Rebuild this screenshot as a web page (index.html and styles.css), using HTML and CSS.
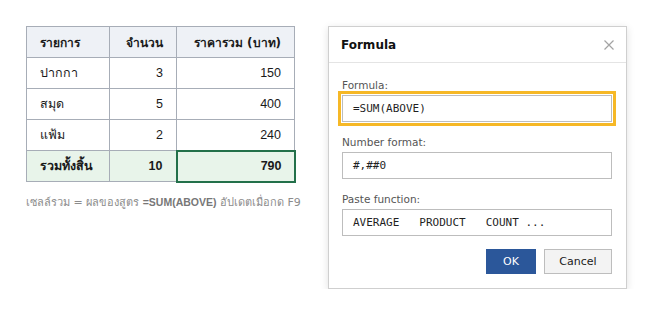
FILE: index.html
```html
<!DOCTYPE html>
<html>
<head>
<meta charset="utf-8">
<link rel="stylesheet" href="styles.css">
</head>
<body>
<div class="page">
  <div class="sheet">
    <table class="grid">
      <colgroup><col class="c1"><col class="c2"><col class="c3"></colgroup>
      <thead>
        <tr><th class="left">รายการ</th><th>จำนวน</th><th>ราคารวม (บาท)</th></tr>
      </thead>
      <tbody>
        <tr><td class="left">ปากกา</td><td>3</td><td>150</td></tr>
        <tr><td class="left">สมุด</td><td>5</td><td>400</td></tr>
        <tr><td class="left">แฟ้ม</td><td>2</td><td>240</td></tr>
        <tr class="total"><td class="left">รวมทั้งสิ้น</td><td>10</td><td class="active">790</td></tr>
      </tbody>
    </table>
    <p class="note">เซลล์รวม = ผลของสูตร <b>=SUM(ABOVE)</b> อัปเดตเมื่อกด F9</p>
  </div>

  <div class="dialog">
    <div class="dlg-head">
      <span class="dlg-title">Formula</span>
      <svg class="close" width="10" height="10" viewBox="0 0 10 10"><path d="M0.5 0.5L9.5 9.5M9.5 0.5L0.5 9.5" stroke="#a3a3a3" stroke-width="1.2" fill="none"/></svg>
    </div>
    <div class="dlg-body">
      <div class="field">
        <label class="lbl">Formula:</label>
        <div class="inp mono focus">=SUM(ABOVE)</div>
      </div>
      <div class="field">
        <label class="lbl">Number format:</label>
        <div class="inp mono">#,##0</div>
      </div>
      <div class="field">
        <label class="lbl">Paste function:</label>
        <div class="inp mono funcs"><span>AVERAGE</span><span>PRODUCT</span><span>COUNT ...</span></div>
      </div>
      <div class="actions">
        <button class="btn primary">OK</button>
        <button class="btn">Cancel</button>
      </div>
    </div>
  </div>
</div>
</body>
</html>
```
FILE: styles.css
```css
html, body {
  margin: 0;
  padding: 0;
  background: #ffffff;
}
body {
  font-family: Tahoma, "DejaVu Sans", sans-serif;
  color: #1a1a1a;
}
.page {
  display: flex;
  align-items: flex-start;
  padding: 26px 0 0 26px;
  gap: 34px;
}
.sheet {
  width: 268px;
}
.grid {
  border-collapse: collapse;
  width: 268px;
  font-size: 12.5px;
  table-layout: fixed;
}
.c1 { width: 83px; }
.c2 { width: 67px; }
.c3 { width: 118px; }
.grid th, .grid td {
  border: 1px solid #a7adb7;
  height: 31px;
  padding: 0 13px;
  text-align: right;
  box-sizing: border-box;
  white-space: nowrap;
}
.grid td {
  font-family: "Liberation Sans", "DejaVu Sans", sans-serif;
  font-size: 12.5px;
}
.grid th {
  background: #eef1f6;
  font-weight: bold;
  font-size: 12px;
}
.grid .left { text-align: left; }
.total td {
  background: #e8f4ea;
  font-weight: bold;
}
.total td.active {
  border: 2px solid #23704a;
  padding-right: 12px;
}
.note {
  margin: 10px 0 0 0;
  font-size: 11px;
  color: #8c8c8c;
  white-space: nowrap;
}
.note b {
  font-family: "Liberation Sans", sans-serif;
  color: #777;
  font-size: 10.5px;
}
.dialog {
  width: 299px;
  box-sizing: border-box;
  border: 1px solid #cfcfcf;
  background: #fff;
  box-shadow: 0 2px 8px rgba(0,0,0,0.12);
}
.dlg-head {
  height: 35px;
  border-bottom: 1px solid #e4e4e4;
  display: flex;
  align-items: center;
  justify-content: space-between;
  padding: 0 12px 0 12px;
}
.dlg-title {
  font-weight: bold;
  font-size: 12px;
  color: #111;
}
.close { display: block; }
.dlg-body {
  padding: 15px 14px 14px 13px;
}
.field {
  display: flex;
  flex-direction: column;
  gap: 3px;
  margin-bottom: 13px;
}
.lbl {
  font-size: 10.5px;
  line-height: 14px;
  color: #555;
}
.inp {
  height: 27px;
  box-sizing: border-box;
  border: 1px solid #bdbdbd;
  padding: 0 10px;
  display: flex;
  align-items: center;
  font-size: 11px;
  color: #1f1f1f;
}
.mono {
  font-family: "DejaVu Sans Mono", "Liberation Mono", monospace;
}
.focus {
  outline: 3px solid #f6b826;
  outline-offset: 1px;
}
.funcs {
  gap: 20px;
}
.actions {
  display: flex;
  justify-content: flex-end;
  gap: 8px;
}
.btn {
  font-family: Tahoma, "DejaVu Sans", sans-serif;
  font-size: 11px;
  height: 25px;
  min-width: 68px;
  border: 1px solid #bdbdbd;
  background: #f3f3f3;
  color: #1a1a1a;
  padding: 0 10px;
}
.btn.primary {
  min-width: 50px;
  background: #2b579a;
  border-color: #2b579a;
  color: #fff;
}
```
